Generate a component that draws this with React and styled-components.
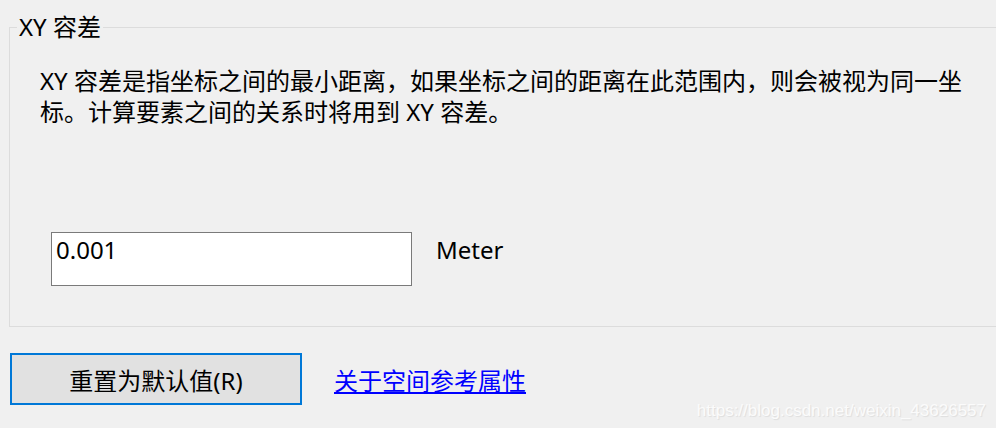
import styled, { createGlobalStyle } from "styled-components";

const GlobalStyle = createGlobalStyle`
  html, body {
    margin: 0;
    padding: 0;
    background: #f0f0f0;
  }
  body {
    font-family: "Noto Sans", "Noto Sans CJK SC", sans-serif;
    color: #000;
  }
`;

const Page = styled.div`
  position: relative;
  width: 996px;
  height: 428px;
  overflow: hidden;
  box-sizing: border-box;
  padding: 16px 0 0 9px;
`;

const GroupBox = styled.fieldset`
  margin: 0 -20px 0 0;
  padding: 0 0 40px 0;
  height: 311px;
  box-sizing: border-box;
  border: 1px solid #dcdcdc;
  display: flex;
  flex-direction: column;
`;

const Legend = styled.legend`
  margin-left: 7px;
  padding: 0 2px;
  font-size: 24px;
  line-height: 22px;
`;

const Description = styled.p`
  margin: 27px 0 0 30px;
  width: 940px;
  font-size: 24px;
  line-height: 31px;
`;

const FieldRow = styled.div`
  display: flex;
  align-items: flex-start;
  gap: 24px;
  margin: auto 0 0 41px;
`;

const TextBox = styled.div`
  width: 361px;
  height: 54px;
  box-sizing: border-box;
  border: 1px solid #7a7a7a;
  background: #fff;
  padding: 0 4px;
  font-size: 24px;
  line-height: 34px;
`;

const Unit = styled.span`
  font-size: 24px;
  line-height: 36px;
`;

const Footer = styled.div`
  display: flex;
  align-items: center;
  gap: 32px;
  margin: 26px 0 0 1px;
`;

const Button = styled.button`
  width: 292px;
  height: 52px;
  box-sizing: border-box;
  border: 2px solid #0078d7;
  background: #e1e1e1;
  font-family: inherit;
  font-size: 24px;
  color: #000;
  padding: 0;
`;

const Link = styled.a`
  color: #0000ff;
  text-decoration: underline;
  font-size: 24px;
  cursor: pointer;
`;

const Watermark = styled.span`
  position: absolute;
  right: 10px;
  bottom: 7px;
  font-family: "Liberation Sans", Arial, sans-serif;
  font-size: 17px;
  color: #fbfbfb;
  text-shadow: 1px 1px 1px rgba(0, 0, 0, 0.08);
`;

export default function App() {
  return (
    <>
      <GlobalStyle />
      <Page>
        <GroupBox>
          <Legend>XY 容差</Legend>
          <Description>
            XY 容差是指坐标之间的最小距离，如果坐标之间的距离在此范围内，则会被视为同一坐标。计算要素之间的关系时将用到 XY 容差。
          </Description>
          <FieldRow>
            <TextBox>0.001</TextBox>
            <Unit>Meter</Unit>
          </FieldRow>
        </GroupBox>
        <Footer>
          <Button>重置为默认值(R)</Button>
          <Link>关于空间参考属性</Link>
        </Footer>
        <Watermark>https://blog.csdn.net/weixin_43626557</Watermark>
      </Page>
    </>
  );
}
